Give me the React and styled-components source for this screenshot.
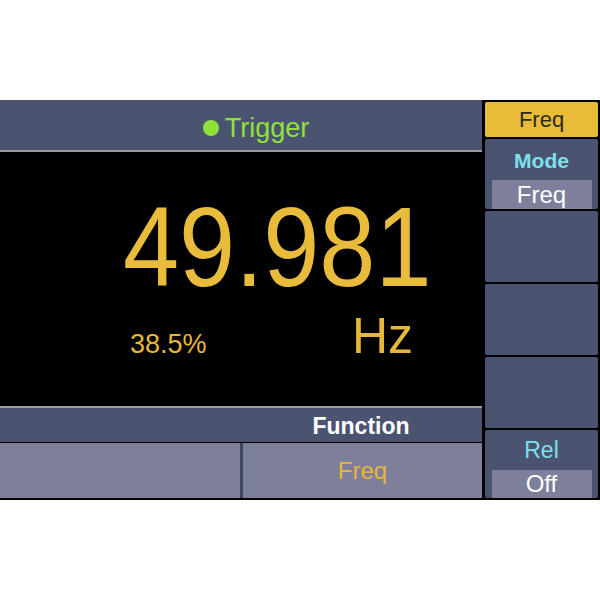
import React from 'react';
import styled, { createGlobalStyle } from 'styled-components';

const GlobalStyle = createGlobalStyle`
    html, body {
        margin: 0;
        padding: 0;
        background: #ffffff;
        font-family: "Liberation Sans", Arial, sans-serif;
    }
`;

const Page = styled.div`
    width: 600px;
    height: 600px;
    padding-top: 100px;
    box-sizing: border-box;
`;

const Screen = styled.div`
    width: 600px;
    height: 400px;
    background: #000;
    display: grid;
    grid-template-columns: 482px 113px;
    column-gap: 3px;
`;

const LeftPanel = styled.div`
    display: flex;
    flex-direction: column;
    padding-bottom: 2px;
`;

const Header = styled.div`
    height: 50px;
    background: #4a5470;
    display: flex;
    align-items: center;
    justify-content: center;
    padding: 6px 0 0 30px;
    box-sizing: border-box;
    gap: 6px;
`;

const Dot = styled.span`
    width: 16px;
    height: 16px;
    border-radius: 50%;
    background: #8ee23a;
`;

const Title = styled.span`
    color: #8ee23a;
    font-size: 27px;
`;

const Rule = styled.div`
    height: 2px;
    background: #9a9c9e;
`;

const Display = styled.div`
    height: 254px;
    background: #000;
    display: flex;
    flex-direction: column;
    align-items: flex-start;
`;

const Reading = styled.div`
    margin: 38px 0 0 123px;
    font-size: 114px;
    line-height: 1;
    color: #e8bc3a;
    transform: scaleX(0.885);
    transform-origin: left center;
`;

const SubRow = styled.div`
    display: flex;
    align-items: baseline;
    margin-top: 7px;
    padding-left: 130px;
    line-height: 1;
    color: #e6b83a;
`;

const Duty = styled.span`
    font-size: 27px;
    width: 222px;
`;

const Unit = styled.span`
    font-size: 50px;
`;

const FunctionBand = styled.div`
    height: 34px;
    background: #4a5470;
    display: grid;
    grid-template-columns: 240px 1fr;
    align-items: center;
    margin-bottom: 1px;
`;

const BandLabel = styled.span`
    grid-column: 2;
    text-align: center;
    color: #ffffff;
    font-weight: bold;
    font-size: 23px;
    padding-top: 2px;
`;

const ButtonRow = styled.div`
    height: 55px;
    display: grid;
    grid-template-columns: 240px 1fr;
    column-gap: 3px;
    background: #3e4660;
`;

const SoftButton = styled.div`
    background: #7e7f9b;
    display: flex;
    align-items: center;
    justify-content: center;
    color: #e6b83a;
    font-size: 24px;
`;

const RightPanel = styled.div`
    display: flex;
    flex-direction: column;
    gap: 2px;
    padding-top: 2px;
`;

const SideKey = styled.div`
    height: ${({ h }) => h}px;
    background: ${({ active }) => (active ? '#e9bc37' : '#4a5470')};
    color: ${({ active }) => (active ? '#2e2a1c' : '#7ee0ea')};
    border-radius: 2px;
    display: flex;
    flex-direction: column;
    align-items: center;
    justify-content: ${({ active }) => (active ? 'center' : 'flex-start')};
    box-sizing: border-box;
    padding-top: ${({ top }) => top || 0}px;
    font-size: 22px;
`;

const KeyLabel = styled.span`
    font-size: ${({ bold }) => (bold ? 21 : 23)}px;
    font-weight: ${({ bold }) => (bold ? 'bold' : 'normal')};
    line-height: 1;
`;

const KeyValue = styled.div`
    width: 100px;
    height: 30px;
    margin-top: ${({ gap }) => gap}px;
    background: #7e7f9b;
    color: #ffffff;
    font-size: 24px;
    display: flex;
    align-items: center;
    justify-content: center;
`;

export default function App() {
    return (
        <>
            <GlobalStyle />
            <Page>
                <Screen>
                    <LeftPanel>
                        <Header>
                            <Dot />
                            <Title>Trigger</Title>
                        </Header>
                        <Rule />
                        <Display>
                            <Reading>49.981</Reading>
                            <SubRow>
                                <Duty>38.5%</Duty>
                                <Unit>Hz</Unit>
                            </SubRow>
                        </Display>
                        <Rule />
                        <FunctionBand>
                            <BandLabel>Function</BandLabel>
                        </FunctionBand>
                        <ButtonRow>
                            <SoftButton />
                            <SoftButton>Freq</SoftButton>
                        </ButtonRow>
                    </LeftPanel>
                    <RightPanel>
                        <SideKey h={35} active>Freq</SideKey>
                        <SideKey h={70} top={11}>
                            <KeyLabel bold>Mode</KeyLabel>
                            <KeyValue gap={9}>Freq</KeyValue>
                        </SideKey>
                        <SideKey h={71} />
                        <SideKey h={71} />
                        <SideKey h={71} />
                        <SideKey h={68} top={9}>
                            <KeyLabel>Rel</KeyLabel>
                            <KeyValue gap={8}>Off</KeyValue>
                        </SideKey>
                    </RightPanel>
                </Screen>
            </Page>
        </>
    );
}
